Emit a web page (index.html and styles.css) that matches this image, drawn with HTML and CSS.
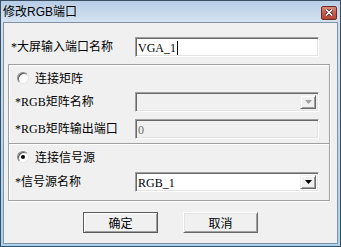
FILE: index.html
```html
<!DOCTYPE html>
<html lang="zh-CN">
<head>
  <meta charset="UTF-8">
  <title>修改RGB端口</title>
  <link rel="stylesheet" href="styles.css">
</head>
<body>

<div class="window">
  <div class="titlebar">
    <span class="title">修改RGB端口</span>
    <span class="close">
      <svg width="8" height="7" viewBox="0 0 8 7"><path d="M1 0.5 L7 6.5 M7 0.5 L1 6.5" stroke="#3a1a16" stroke-width="3"/><path d="M1 0.5 L7 6.5 M7 0.5 L1 6.5" stroke="#fff" stroke-width="1.6"/></svg>
    </span>
  </div>

  <div class="client">
    <div class="row first">
      <label>*大屏输入端口名称</label>
      <div class="edit">VGA_1<span class="caret"></span></div>
    </div>

    <div class="groupbox">
      <div class="section">
        <div class="radio-row"><span class="radio"></span>连接矩阵</div>
        <div class="row">
          <label>*RGB矩阵名称</label>
          <div class="combo disabled">
            <span class="value"></span>
            <span class="drop"><svg width="7" height="4" viewBox="0 0 7 4"><polygon points="0,0 7,0 3.5,4" fill="#a0a0a0"/></svg></span>
          </div>
        </div>
        <div class="row">
          <label>*RGB矩阵输出端口</label>
          <div class="edit disabled">0</div>
        </div>
      </div>
      <div class="section divider">
        <div class="radio-row"><span class="radio checked"></span>连接信号源</div>
        <div class="row">
          <label>*信号源名称</label>
          <div class="combo">
            <span class="value">RGB_1</span>
            <span class="drop"><svg width="7" height="4" viewBox="0 0 7 4"><polygon points="0,0 7,0 3.5,4" fill="#000"/></svg></span>
          </div>
        </div>
      </div>
    </div>

    <div class="buttons">
      <button class="btn default">确定</button>
      <button class="btn">取消</button>
    </div>
  </div>
</div>

</body>
</html>
```

FILE: styles.css
```css
html, body {
  margin: 0;
  padding: 0;
}
body {
  width: 341px;
  height: 247px;
  overflow: hidden;
  font: 12px/14px "Liberation Serif", "Noto Sans CJK SC", serif;
  color: #000;
}
.window {
  box-sizing: border-box;
  width: 341px;
  height: 247px;
  border: 1px solid #3b4f63;
  background: linear-gradient(#b4cbe4, #cfdfef 22px, #a9d2ec 230px);
  padding: 0 2px 2px;
  display: flex;
  flex-direction: column;
}
.titlebar {
  height: 21px;
  margin: 0 -2px;
  padding: 0 3px 0 2px;
  display: flex;
  align-items: center;
  justify-content: space-between;
  background: linear-gradient(#b7cde6, #d4e2f0);
}
.title {
  font-family: "Liberation Sans", "Noto Sans CJK SC", sans-serif;
  font-size: 12px;
  color: #000;
  margin-top: 1px;
}
.close {
  box-sizing: border-box;
  width: 16px;
  height: 14px;
  margin-top: 2px;
  border: 1px solid #6e2c24;
  border-radius: 2px;
  background: linear-gradient(#d98a7c, #c25b4b 50%, #b24737);
  display: flex;
  align-items: center;
  justify-content: center;
}
.close svg { display: block; }

.client {
  flex: 1;
  border: 1px solid #7f93a8;
  background: #f0f0f0;
  padding-top: 14px;
}

.row {
  display: grid;
  grid-template-columns: 120px 184px;
  align-items: center;
}
.row.first {
  grid-template-columns: 124px 184px;
  padding-left: 7px;
}
label {
  white-space: nowrap;
}

.edit, .combo {
  box-sizing: border-box;
  height: 20px;
  border: 1px solid;
  border-color: #a0a0a0 #fff #fff #a0a0a0;
  box-shadow: inset 1px 1px 0 #696969, inset -1px -1px 0 #e3e3e3;
  background: #fff;
  padding: 3px 2px 0 2px;
  display: flex;
  align-items: flex-start;
}
.edit.disabled, .combo.disabled {
  background: #f0f0f0;
  color: #6d6d6d;
}
.caret {
  width: 1px;
  height: 14px;
  margin-left: 1px;
  background: #000;
}
.combo {
  padding: 2px 2px 2px 2px;
  align-items: stretch;
}
.combo .value {
  flex: 1;
  padding-top: 1px;
}
.drop {
  box-sizing: border-box;
  width: 16px;
  border: 1px solid;
  border-color: #f0f0f0 #696969 #696969 #f0f0f0;
  box-shadow: inset 1px 1px 0 #fff, inset -1px -1px 0 #a0a0a0;
  background: #f0f0f0;
  display: flex;
  align-items: center;
  justify-content: center;
}
.drop svg { display: block; }

.groupbox {
  box-sizing: border-box;
  width: 322px;
  margin: 7px 0 0 4px;
  border: 1px solid #a0a0a0;
  box-shadow: inset 1px 1px 0 #fff, 1px 1px 0 #fff;
}
.section {
  padding: 6px 0 4px 6px;
}
.section .row + .row { margin-top: 7px; }
.section .radio-row + .row { margin-top: 7px; }
.divider {
  border-top: 1px solid #a0a0a0;
  box-shadow: inset 0 1px 0 #fff;
  padding-bottom: 8px;
}
.divider .radio-row + .row { margin-top: 8px; }

.radio-row {
  height: 14px;
  display: flex;
  align-items: center;
  gap: 6px;
  padding-left: 2px;
  font-family: "Noto Sans CJK SC", sans-serif;
}
.radio {
  box-sizing: border-box;
  position: relative;
  width: 12px;
  height: 12px;
  border-radius: 50%;
  border: 1px solid;
  border-color: #8a8a8a #e6e6e6 #e6e6e6 #8a8a8a;
  background: radial-gradient(circle at 60% 60%, #fff 50%, #e8e8e8);
  box-shadow: inset 1px 1px 0 #5a5a5a;
}
.radio.checked::after {
  content: "";
  position: absolute;
  left: 3px;
  top: 3px;
  width: 4px;
  height: 4px;
  border-radius: 50%;
  background: #000;
}

.buttons {
  display: flex;
  justify-content: center;
  gap: 25px;
  margin-top: 11px;
}
.btn {
  box-sizing: border-box;
  width: 75px;
  height: 21px;
  padding: 0;
  font: 12px/14px "Noto Sans CJK SC", sans-serif;
  color: #000;
  background: #f0f0f0;
  border: 1px solid;
  border-color: #fff #696969 #696969 #fff;
  box-shadow: inset 1px 1px 0 #e3e3e3, inset -1px -1px 0 #a0a0a0;
}
.btn.default {
  border-color: #5a5a5a;
  box-shadow: inset 1px 1px 0 #fff, inset -1px -1px 0 #a0a0a0;
}
```
